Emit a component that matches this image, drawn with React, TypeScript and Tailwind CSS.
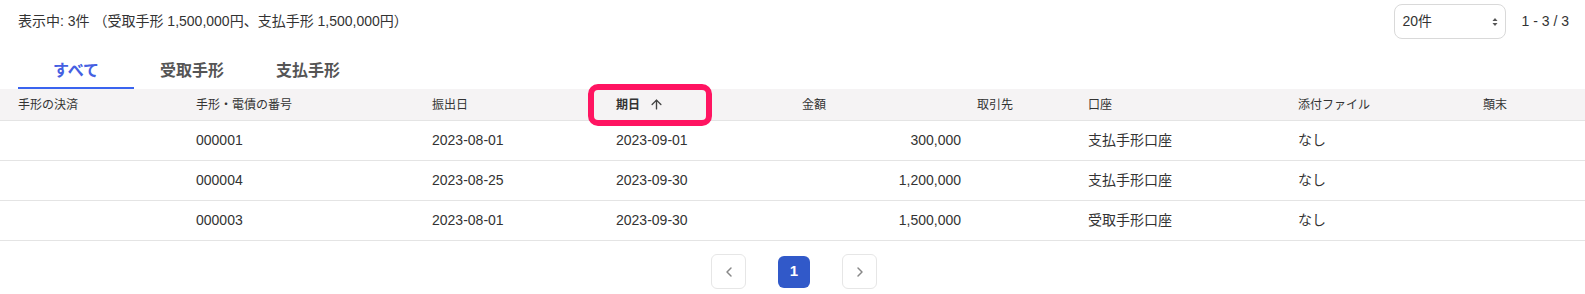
import { ArrowUp, ChevronLeft, ChevronRight } from 'lucide-react';

type Row = {
  no: string;
  issued: string;
  due: string;
  amount: string;
  account: string;
  file: string;
};

const rows: Row[] = [
  { no: '000001', issued: '2023-08-01', due: '2023-09-01', amount: '300,000', account: '支払手形口座', file: 'なし' },
  { no: '000004', issued: '2023-08-25', due: '2023-09-30', amount: '1,200,000', account: '支払手形口座', file: 'なし' },
  { no: '000003', issued: '2023-08-01', due: '2023-09-30', amount: '1,500,000', account: '受取手形口座', file: 'なし' },
];

const grid = 'grid grid-cols-[178px_236px_184px_186px_177px_109px_210px_185px_1fr]';

function SelectArrows() {
  return (
    <svg width="6" height="10" viewBox="0 0 6 10" className="text-[#555]">
      <path d="M3 1 L5.5 4 L0.5 4 Z" fill="currentColor" />
      <path d="M3 9 L5.5 6 L0.5 6 Z" fill="currentColor" />
    </svg>
  );
}

export default function App() {
  const tabs = ['すべて', '受取手形', '支払手形'];

  return (
    <div
      className="w-[1585px] h-[294px] bg-white text-[#333] overflow-hidden"
      style={{ fontFamily: '"Liberation Sans", "Noto Sans CJK JP", sans-serif' }}
    >
      {/* Summary + per page */}
      <div className="flex items-center justify-between pt-[4px] pl-[18px] pr-[16px]">
        <div className="text-[14px] leading-[35px]">
          表示中: 3件 （受取手形 1,500,000円、支払手形 1,500,000円）
        </div>
        <div className="flex items-center gap-[16px]">
          <div className="w-[112px] h-[35px] border border-[#d9d9d9] rounded-[8px] flex items-center justify-between pl-[8px] pr-[7px] text-[14px]">
            <span>20件</span>
            <SelectArrows />
          </div>
          <span className="text-[14px]">1 - 3 / 3</span>
        </div>
      </div>

      {/* Tabs */}
      <div className="flex pl-[18px] mt-[14px]">
        {tabs.map((t, i) => (
          <div
            key={t}
            className={`w-[116px] h-[36px] pt-[2px] flex items-center justify-center text-[16px] font-bold border-b-2 ${
              i === 0 ? 'text-[#4560e2] border-[#3a64ef]' : 'text-[#555] border-transparent'
            }`}
          >
            {t}
          </div>
        ))}
      </div>

      {/* Table header */}
      <div className={`${grid} h-[32px] bg-[#f5f3f4] border-b border-[#e4e4e4] text-[12px] items-center`}>
        <div className="pl-[18px]">手形の決済</div>
        <div className="pl-[18px]">手形・電債の番号</div>
        <div className="pl-[18px]">振出日</div>
        <div className="relative pl-[18px] h-full flex items-center gap-[9px] font-bold">
          <span>期日</span>
          <ArrowUp size={15} strokeWidth={2.2} className="text-[#444]" />
          {/* highlight annotation */}
          <div className="absolute left-[-10px] top-[-5px] w-[124px] h-[42px] border-[6px] border-[#ff1461] rounded-[10px]" />
        </div>
        <div className="pl-[18px]">金額</div>
        <div className="pl-[16px]">取引先</div>
        <div className="pl-[18px]">口座</div>
        <div className="pl-[18px]">添付ファイル</div>
        <div className="pl-[18px]">顛末</div>
      </div>

      {/* Rows */}
      {rows.map((r) => (
        <div key={r.no} className={`${grid} h-[40px] border-b border-[#e4e4e4] text-[14px] items-center`}>
          <div />
          <div className="pl-[18px]">{r.no}</div>
          <div className="pl-[18px]">{r.issued}</div>
          <div className="pl-[18px]">{r.due}</div>
          <div className="text-right">{r.amount}</div>
          <div />
          <div className="pl-[18px]">{r.account}</div>
          <div className="pl-[18px]">{r.file}</div>
          <div />
        </div>
      ))}

      {/* Pagination */}
      <div className="flex justify-center items-center gap-[32px] mt-[13px] pl-[3px]">
        <button className="w-[35px] h-[35px] border border-[#e6e6e6] rounded-[6px] flex items-center justify-center text-[#888]">
          <ChevronLeft size={16} strokeWidth={2.2} />
        </button>
        <button className="w-[32px] h-[32px] rounded-[6px] bg-[#3159c9] text-white text-[15px] font-bold flex items-center justify-center">
          1
        </button>
        <button className="w-[35px] h-[35px] border border-[#e6e6e6] rounded-[6px] flex items-center justify-center text-[#888]">
          <ChevronRight size={16} strokeWidth={2.2} />
        </button>
      </div>
    </div>
  );
}
